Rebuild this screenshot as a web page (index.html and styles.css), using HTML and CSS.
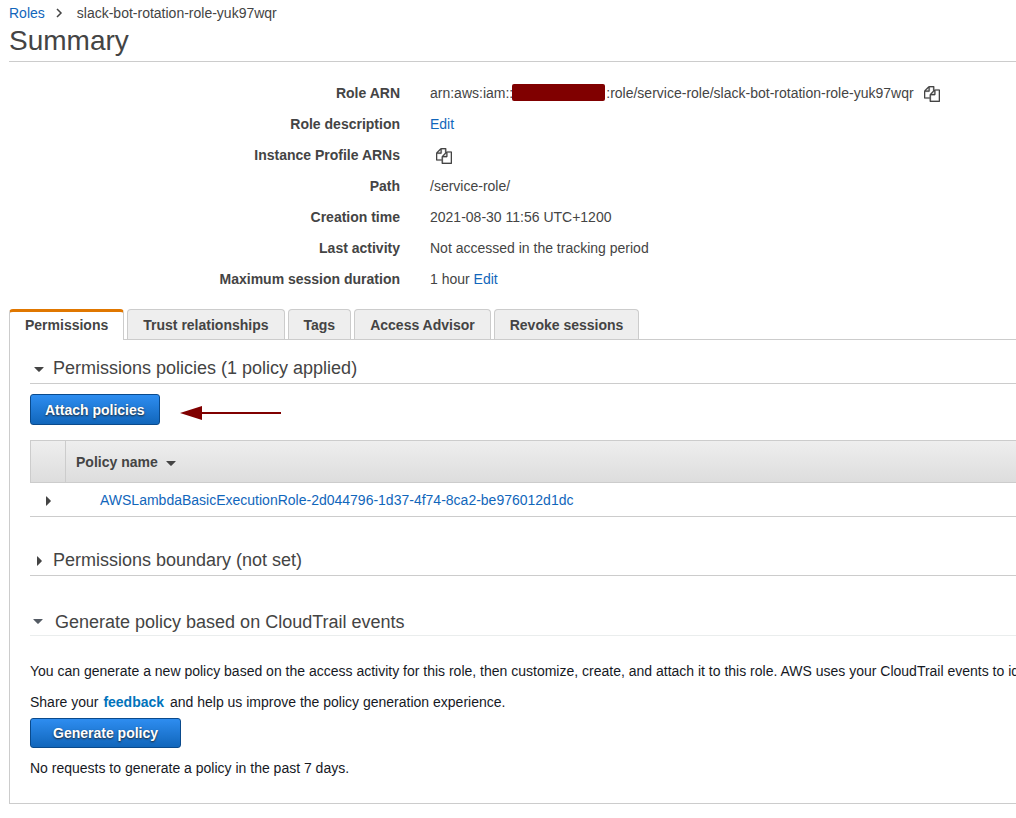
FILE: index.html
```html
<!DOCTYPE html>
<html lang="en">
<head>
<meta charset="utf-8">
<meta name="viewport" content="width=device-width, initial-scale=1">
<title>Role summary</title>
<link rel="stylesheet" href="styles.css">
</head>
<body>
<svg class="sprite" aria-hidden="true">
  <symbol id="copy" viewBox="0 0 1792 1792"><path d="M1696 384q40 0 68 28t28 68v1216q0 40-28 68t-68 28h-960q-40 0-68-28t-28-68v-288h-544q-40 0-68-28t-28-68v-672q0-40 20-88t48-76l408-408q28-28 76-48t88-20h416q40 0 68 28t28 68v328q68-40 128-40h416zm-544 213l-299 299h299v-299zm-640-384l-299 299h299v-299zm196 647l316-316v-416h-384v416q0 40-28 68t-68 28h-416v640h512v-256q0-40 20-88t48-76zm956 804v-1152h-384v416q0 40-28 68t-68 28h-416v640h896z"/></symbol>
  <symbol id="down" viewBox="0 0 10 10"><path d="M0.6 3h8.8q.6 0 .2.6L5.6 7.6q-.6.6-1.2 0L.4 3.6Q0 3 .6 3z"/></symbol>
  <symbol id="right" viewBox="0 0 10 10"><path d="M3 .6v8.8q0 .6.6.2l4-4q.6-.6 0-1.2l-4-4Q3 0 3 .6z"/></symbol>
</svg>
<main class="page">
  <nav class="breadcrumb" aria-label="Breadcrumb">
    <a href="#roles">Roles</a>
    <svg class="chevron" viewBox="0 0 8 10" aria-hidden="true"><path d="M2 1l4 4-4 4"/></svg>
    <span>slack-bot-rotation-role-yuk97wqr</span>
  </nav>
  <h1 class="title">Summary</h1>

  <dl class="details">
    <dt>Role ARN</dt>
    <dd><span>arn:aws:iam::</span><span class="redacted"></span><span>:role/service-role/slack-bot-rotation-role-yuk97wqr</span><button class="copy copy-after" type="button" aria-label="Copy role ARN"><svg><use href="#copy"/></svg></button></dd>
    <dt>Role description</dt>
    <dd><a href="#description">Edit</a></dd>
    <dt>Instance Profile ARNs</dt>
    <dd><button class="copy copy-alone" type="button" aria-label="Copy instance profile ARNs"><svg><use href="#copy"/></svg></button></dd>
    <dt>Path</dt>
    <dd>/service-role/</dd>
    <dt>Creation time</dt>
    <dd>2021-08-30 11:56 UTC+1200</dd>
    <dt>Last activity</dt>
    <dd>Not accessed in the tracking period</dd>
    <dt>Maximum session duration</dt>
    <dd><span>1 hour <a href="#duration">Edit</a></span></dd>
  </dl>

  <div class="tabs" role="tablist">
    <button class="tab tab-active" type="button" role="tab" aria-selected="true">Permissions</button>
    <button class="tab" type="button" role="tab" aria-selected="false">Trust relationships</button>
    <button class="tab" type="button" role="tab" aria-selected="false">Tags</button>
    <button class="tab" type="button" role="tab" aria-selected="false">Access Advisor</button>
    <button class="tab" type="button" role="tab" aria-selected="false">Revoke sessions</button>
  </div>

  <div class="panel" role="tabpanel">
    <section class="policies">
      <h2 class="section-title"><button class="toggle" type="button" aria-expanded="true"><svg class="caret"><use href="#down"/></svg>Permissions policies (1 policy applied)</button></h2>
      <div class="actions">
        <button class="primary" type="button">Attach policies</button>
        <svg class="arrow" viewBox="0 0 101 14" aria-hidden="true"><path d="M0 7L22 0v6h79v2H22v6z"/></svg>
      </div>
      <table class="policy-table">
        <thead>
          <tr><th class="expand-col" aria-label="Expand"></th><th><button class="sort" type="button">Policy name<svg class="caret"><use href="#down"/></svg></button></th></tr>
        </thead>
        <tbody>
          <tr><td class="expand-col"><button class="expand" type="button" aria-label="Expand policy"><svg class="caret"><use href="#right"/></svg></button></td><td class="name"><a href="#policy">AWSLambdaBasicExecutionRole-2d044796-1d37-4f74-8ca2-be976012d1dc</a></td></tr>
        </tbody>
      </table>
    </section>

    <section class="boundary">
      <h2 class="section-title"><button class="toggle" type="button" aria-expanded="false"><svg class="caret"><use href="#right"/></svg>Permissions boundary (not set)</button></h2>
    </section>

    <section class="generate">
      <h2 class="section-title section-title-light"><button class="toggle" type="button" aria-expanded="true"><svg class="caret"><use href="#down"/></svg>Generate policy based on CloudTrail events</button></h2>
      <p class="intro">You can generate a new policy based on the access activity for this role, then customize, create, and attach it to this role. AWS uses your CloudTrail events to identify the services and actions used and generate a policy.</p>
      <p class="share">Share your <a class="feedback" href="#feedback">feedback</a> and help us improve the policy generation experience.</p>
      <button class="primary primary-wide" type="button">Generate policy</button>
      <p class="status">No requests to generate a policy in the past 7 days.</p>
    </section>
  </div>
</main>
</body>
</html>
```

FILE: styles.css
```css
* { box-sizing: border-box; }

body {
  margin: 0;
  background: #fff;
  color: #444;
  font: 14px/18px "Liberation Sans", Arial, sans-serif;
}

button {
  margin: 0;
  padding: 0;
  border: 0;
  background: none;
  color: inherit;
  font: inherit;
  cursor: pointer;
}

svg { display: block; fill: currentColor; }
a { color: #1166bb; text-decoration: none; }
a:hover { text-decoration: underline; }

.sprite { display: none; }

.page { padding: 4px 0 14px 9px; overflow: hidden; }

.breadcrumb { display: flex; align-items: center; }

.chevron {
  width: 8px;
  height: 10px;
  margin: 0 14px 0 10px;
  fill: none;
  stroke: #444;
  stroke-width: 1.5;
}

.title {
  margin: 0;
  padding-bottom: 2px;
  border-bottom: 1px solid #ccc;
  font-size: 28px;
  font-weight: normal;
  line-height: 37px;
}

.details {
  display: grid;
  grid-template-columns: 391px 1fr;
  column-gap: 30px;
  margin: 16px 0 14px;
  line-height: 31px;
  white-space: nowrap;
}

.details dt { font-weight: bold; text-align: right; }
.details dd { display: flex; align-items: center; height: 31px; margin: 0; }

.redacted {
  width: 93px;
  height: 17px;
  margin: 0 1px 2px -1px;
  border-radius: 2px;
  background: #800000;
}

.copy svg {
  width: 16px;
  height: 16px;
  stroke: currentColor;
  stroke-width: 30;
}

.copy-after { margin-left: 10px; }
.copy-alone { margin-left: 6px; }

.tabs { display: flex; gap: 3px; }

.tab {
  height: 30px;
  padding: 0 15px;
  border: 1px solid #ccc;
  border-bottom: 0;
  border-radius: 4px 4px 0 0;
  background: #eee;
  font-weight: bold;
}

.tab-active {
  z-index: 1;
  height: 31px;
  margin-bottom: -1px;
  border-top: 3px solid #e07700;
  padding-bottom: 3px;
  background: #fff;
}

.panel {
  padding: 14px 0 26px 20px;
  border: 1px solid #ccc;
  border-right: 0;
}

.section-title {
  margin: 0;
  border-bottom: 1px solid #ccc;
  font-size: 18px;
  font-weight: normal;
  line-height: 29px;
}

.toggle { display: flex; align-items: center; gap: 9px; padding-left: 4px; }
.caret { width: 10px; height: 10px; }

.section-title-light { border-color: #eaeded; line-height: 27px; }
.section-title-light .toggle { gap: 12px; padding-left: 3px; }
.section-title-light .caret { margin-bottom: 2px; color: #545b64; }

.actions { display: flex; align-items: center; gap: 20px; margin: 10px 0 15px; }

.primary {
  height: 31px;
  padding: 0 14px;
  border: 1px solid #0a4a8c;
  border-radius: 3px;
  background: linear-gradient(#2e8df0, #1166bb);
  color: #fff;
  font-weight: bold;
  text-shadow: 0 1px 2px #222;
}

.primary-wide { display: block; height: 30px; padding: 0 22px; }

.arrow { width: 101px; height: 14px; margin-top: 6px; fill: #800000; }

.policy-table { width: 100%; border-collapse: separate; border-spacing: 0; }

.policy-table th {
  height: 43px;
  padding: 0 10px;
  border: solid #ccc;
  border-width: 1px 0 1px 1px;
  background: linear-gradient(#eee, #ddd);
  text-align: left;
}

.policy-table td {
  height: 34px;
  padding: 0;
  border-bottom: 1px solid #ccc;
}

.policy-table .expand-col { width: 35px; }
.policy-table .name { padding-left: 35px; }
.sort { display: flex; align-items: center; gap: 8px; }
.sort .caret { margin-top: 2px; }
.expand { display: block; margin: 2px 0 0 13px; }

.boundary { margin-top: 29px; }
.generate { margin-top: 33px; color: #16191f; white-space: nowrap; }
.generate .section-title { color: #444; line-height: 26px; }

.intro { margin: 26px 0 0; }
.share { margin: 13px 0 7px; }
.feedback { margin: 0 2px 0 1px; color: #0073bb; font-weight: bold; }
.status { margin: 11px 0 0; }
```
